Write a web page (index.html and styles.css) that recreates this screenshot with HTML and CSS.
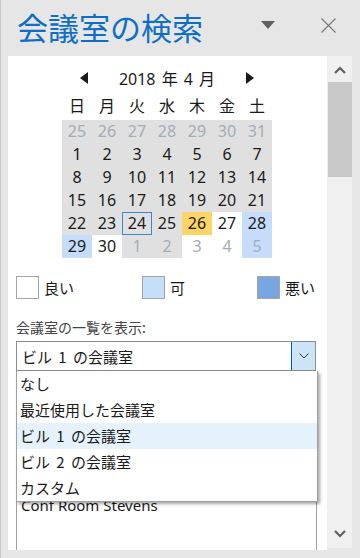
FILE: index.html
```html
<!DOCTYPE html>
<html lang="ja">
<head>
    <meta charset="UTF-8">
    <meta name="viewport" content="width=device-width, initial-scale=1.0">
    <title>会議室の検索</title>
    <link rel="stylesheet" href="styles.css">
</head>
<body>
    <div class="pane">
        <!-- HEADER -->
        <div class="header">
            <h1 class="title">会議室の検索</h1>
            <span class="menu-btn"></span>
            <svg class="close-btn" width="15" height="15" viewBox="0 0 15 15">
                <path d="M0.5 0.5 L14.5 14.5 M14.5 0.5 L0.5 14.5" stroke="#7a7a7a" stroke-width="1.2" fill="none"/>
            </svg>
        </div>

        <div class="body">
            <div class="content">
                <!-- CALENDAR -->
                <div class="calendar">
                    <div class="month">
                        <span class="arrow arrow-left"></span>
                        <span class="month-name">2018 年 4 月</span>
                        <span class="arrow arrow-right"></span>
                    </div>
                    <div class="weekdays">
                        <span>日</span><span>月</span><span>火</span><span>水</span><span>木</span><span>金</span><span>土</span>
                    </div>
                    <div class="days">
                        <span class="other">25</span><span class="other">26</span><span class="other">27</span><span class="other">28</span><span class="other">29</span><span class="other">30</span><span class="other">31</span>
                        <span>1</span><span>2</span><span>3</span><span>4</span><span>5</span><span>6</span><span>7</span>
                        <span>8</span><span>9</span><span>10</span><span>11</span><span>12</span><span>13</span><span>14</span>
                        <span>15</span><span>16</span><span>17</span><span>18</span><span>19</span><span>20</span><span>21</span>
                        <span>22</span><span>23</span><span class="today">24</span><span>25</span><span class="selected">26</span><span class="good">27</span><span class="fair">28</span>
                        <span class="fair">29</span><span class="good">30</span><span class="other">1</span><span class="other">2</span><span class="other good">3</span><span class="other good">4</span><span class="other fair">5</span>
                    </div>
                </div>

                <!-- LEGEND -->
                <div class="legend">
                    <div class="legend-item"><span class="swatch swatch-good"></span>良い</div>
                    <div class="legend-item"><span class="swatch swatch-fair"></span>可</div>
                    <div class="legend-item"><span class="swatch swatch-poor"></span>悪い</div>
                </div>

                <div class="label">会議室の一覧を表示:</div>

                <div class="picker">
                    <div class="combo">
                        <span class="combo-text">ビル 1 の会議室</span>
                        <span class="combo-btn">
                            <svg width="10" height="6" viewBox="0 0 10 6">
                                <path d="M0.5 0.5 L5 5 L9.5 0.5" stroke="#333" stroke-width="1" fill="none"/>
                            </svg>
                        </span>
                    </div>
                    <ul class="options">
                        <li>なし</li>
                        <li>最近使用した会議室</li>
                        <li class="active">ビル 1 の会議室</li>
                        <li>ビル 2 の会議室</li>
                        <li>カスタム</li>
                    </ul>
                </div>

                <ul class="rooms">
                    <li>Conf Room Stevens</li>
                </ul>
            </div>

            <!-- SCROLLBAR -->
            <div class="scrollbar">
                <svg class="scroll-arrow" width="12" height="8" viewBox="0 0 12 8">
                    <path d="M1 7 L6 2 L11 7" stroke="#606060" stroke-width="2.2" fill="none"/>
                </svg>
                <div class="thumb"></div>
                <div class="track"></div>
                <svg class="scroll-arrow" width="12" height="8" viewBox="0 0 12 8">
                    <path d="M1 1 L6 6 L11 1" stroke="#606060" stroke-width="2.2" fill="none"/>
                </svg>
            </div>
        </div>
    </div>
</body>
</html>
```

FILE: styles.css
```css
body {
    margin: 0;
    background-color: #e6e6e6;
    font-family: "Noto Sans", "Noto Sans CJK JP", sans-serif;
    color: #1a1a1a;
}
.pane {
    width: 359px;
    height: 558px;
    border-left: 1px solid #c8c8c8;
    display: flex;
    flex-direction: column;
    overflow: hidden;
}
.header {
    height: 56px;
    display: flex;
    align-items: center;
    padding-left: 16px;
}
.title {
    margin: 0;
    font-family: "Noto Sans CJK JP", sans-serif;
    font-weight: normal;
    font-size: 31px;
    line-height: 40px;
    color: #0f6fc6;
    flex: 1;
    margin-top: -2px;
}
.menu-btn {
    width: 0;
    height: 0;
    border-left: 7px solid transparent;
    border-right: 7px solid transparent;
    border-top: 8px solid #606060;
    margin-right: 46px;
    margin-top: -6px;
}
.close-btn {
    margin-right: 24px;
    margin-top: -6px;
}
.body {
    display: flex;
    height: 494px;
    padding-left: 7px;
}
.content {
    width: 319px;
    background-color: white;
    padding-left: 8px;
    box-sizing: border-box;
    overflow: hidden;
}
.calendar {
    width: 210px;
    margin: 10px 0 0 46px;
}
.month {
    height: 24px;
    display: flex;
    align-items: center;
    justify-content: space-between;
    padding: 0 18px 0 18px;
    font-size: 16px;
}
.month-name {
    word-spacing: 2px;
}
.arrow {
    width: 0;
    height: 0;
    border-top: 6px solid transparent;
    border-bottom: 6px solid transparent;
}
.arrow-left {
    border-right: 8px solid #1a1a1a;
}
.arrow-right {
    border-left: 8px solid #1a1a1a;
}
.weekdays {
    display: grid;
    grid-template-columns: repeat(7, 30px);
    height: 30px;
    align-items: center;
    font-family: "Noto Sans CJK JP", sans-serif;
    font-size: 16px;
    text-align: center;
}
.days {
    display: grid;
    grid-template-columns: repeat(7, 30px);
    grid-auto-rows: 23px;
    font-size: 16px;
    text-align: center;
}
.days span {
    background-color: #e0e0e0;
    line-height: 23px;
    box-sizing: border-box;
}
.days .other {
    color: #a4acb8;
}
.days .today {
    border: 1px solid #3a86cf;
    line-height: 21px;
}
.days .selected {
    background-color: #fdd567;
}
.days .good {
    background-color: white;
}
.days .fair {
    background-color: #c5dcfb;
}
.legend {
    display: grid;
    grid-template-columns: 126px 115px auto;
    margin-top: 18px;
    font-family: "Noto Sans CJK JP", sans-serif;
    font-size: 15px;
}
.legend-item {
    display: flex;
    align-items: center;
    gap: 5px;
    height: 23px;
}
.swatch {
    width: 21px;
    height: 21px;
    border: 1px solid #a6a6a6;
}
.swatch-good {
    background-color: white;
}
.swatch-fair {
    background-color: #c5dffb;
}
.swatch-poor {
    background-color: #78a6e0;
}
.label {
    margin-top: 18px;
    line-height: 20px;
    font-family: "Noto Sans CJK JP", sans-serif;
    font-size: 14px;
    color: #444;
}
.picker {
    position: relative;
    margin-top: 4px;
    width: 300px;
}
.combo {
    height: 30px;
    border: 1px solid #8c8c8c;
    box-sizing: border-box;
    display: flex;
    align-items: center;
    font-family: "Noto Sans CJK JP", sans-serif;
    font-size: 15px;
    word-spacing: 3px;
}
.combo-text {
    flex: 1;
    padding-left: 5px;
}
.combo-btn {
    width: 23px;
    height: 28px;
    background-color: #cce4f7;
    border-left: 1px solid #005a9e;
    display: flex;
    align-items: center;
    justify-content: center;
}
.options {
    position: absolute;
    top: 30px;
    left: 0;
    width: 302px;
    margin: 0;
    padding: 0;
    list-style: none;
    background-color: white;
    border: 1px solid #a0a0a0;
    border-top: none;
    box-sizing: border-box;
    box-shadow: 2px 2px 3px rgba(0,0,0,0.35);
    font-family: "Noto Sans CJK JP", sans-serif;
    font-size: 15px;
    word-spacing: 3px;
    z-index: 2;
}
.options li {
    height: 26px;
    line-height: 26px;
    padding-left: 3px;
}
.options li.active {
    background-color: #e5f1fb;
}
.rooms {
    margin: 8px 0 0 0;
    padding: 113px 0 0 4px;
    width: 301px;
    height: 200px;
    box-sizing: border-box;
    list-style: none;
    border: 1px solid #a0a0a0;
    font-size: 15px;
}
.rooms li {
    line-height: 24px;
}
.scrollbar {
    width: 25px;
    height: 492px;
    background-color: #f0f0f0;
    display: flex;
    flex-direction: column;
    align-items: center;
}
.scroll-arrow {
    margin: 10px 0;
}
.thumb {
    width: 24px;
    height: 95px;
    margin-top: -2px;
    background-color: #c8c8c8;
}
.track {
    flex: 1;
}
```
